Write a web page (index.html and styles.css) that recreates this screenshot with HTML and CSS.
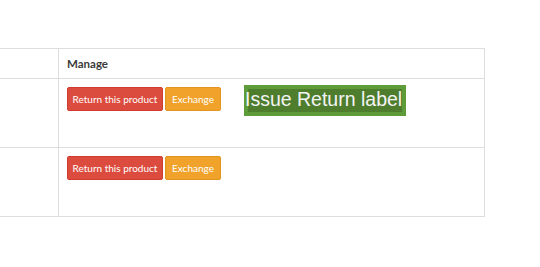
FILE: index.html
```html
<!DOCTYPE html>
<html>
  <head>
    <title>Returns</title>
    <link rel="stylesheet" href="styles.css">
  </head>
  <body>
    <table class="orders">
      <thead>
        <tr>
          <th class="item-col"></th>
          <th class="manage-col">Manage</th>
        </tr>
      </thead>
      <tbody>
        <tr>
          <td class="item-col"></td>
          <td class="manage-col">
            <div class="actions">
              <button class="btn btn-return">Return this product</button>
              <button class="btn btn-exchange">Exchange</button>
              <span class="issue-label"><span class="issue-text">Issue Return label</span></span>
            </div>
          </td>
        </tr>
        <tr>
          <td class="item-col"></td>
          <td class="manage-col">
            <div class="actions">
              <button class="btn btn-return">Return this product</button>
              <button class="btn btn-exchange">Exchange</button>
            </div>
          </td>
        </tr>
      </tbody>
    </table>
  </body>
</html>
```

FILE: styles.css
```css
body {
  margin: 0;
  font-family: Lato, "Open Sans", sans-serif;
  color: #333;
  background: #fff;
  overflow: hidden;
}

.orders {
  border-collapse: collapse;
  margin: 48px 0 0 -100px;
  width: 585px;
}

.orders th,
.orders td {
  border: 1px solid #ddd;
  padding: 8px;
  text-align: left;
  vertical-align: top;
}

.orders th {
  font-size: 11.5px;
  font-weight: bold;
  line-height: 13px;
  color: #3a3a3a;
}

.orders .item-col {
  width: 141px;
}

.actions {
  display: flex;
  align-items: flex-start;
  gap: 2px;
  height: 52px;
}

.btn {
  height: 24px;
  padding: 0;
  border: 1px solid;
  border-radius: 2px;
  color: #fff;
  font-family: Lato, "Open Sans", sans-serif;
  font-size: 10px;
  text-align: center;
  cursor: pointer;
}

.btn-return {
  width: 96px;
  background: #dc4c3e;
  border-color: #d03d2f;
}

.btn-exchange {
  width: 56px;
  background: #f0a22a;
  border-color: #e29420;
}

.issue-label {
  margin: -2px 0 0 21px;
  width: 154px;
  height: 23px;
  border: 4px solid #5e9c3a;
  background: #4e7d2e;
  color: #f4f4f4;
  font-family: "Liberation Sans", Arial, sans-serif;
  font-size: 19.5px;
  line-height: 20px;
  white-space: nowrap;
}

.issue-text {
  margin-left: -3px;
}
```
